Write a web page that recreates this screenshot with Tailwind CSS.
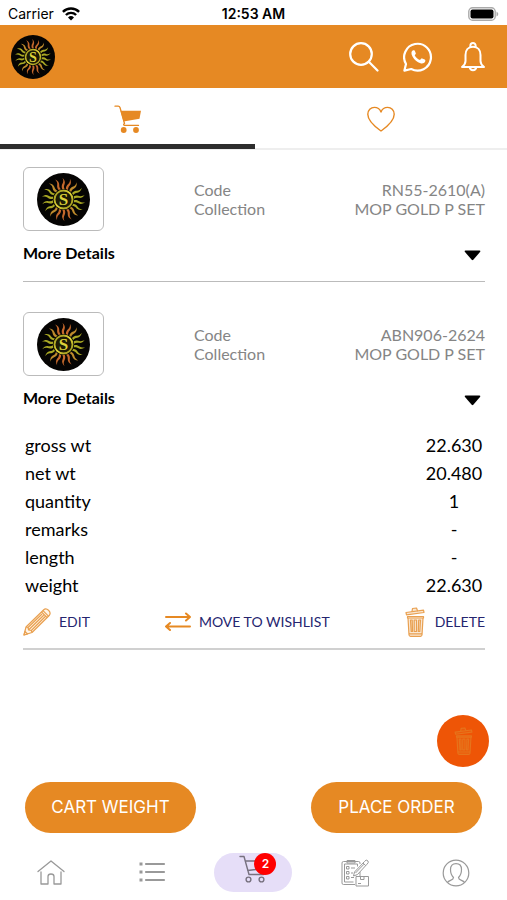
<!DOCTYPE html>
<html lang="en">
<head>
<meta charset="utf-8">
<meta name="viewport" content="width=device-width, initial-scale=1">
<title>Cart</title>
<script src="https://cdn.jsdelivr.net/npm/@tailwindcss/browser@4"></script>
</head>
<body class="flex min-h-screen flex-col bg-white font-['Lato',sans-serif] text-black">

<!-- Shared artwork -->
<svg class="absolute size-0" aria-hidden="true">
  <defs>
    <linearGradient id="gold" x1="0" y1="0" x2="1" y2="1">
      <stop offset="0" stop-color="#8f8a18"/><stop offset=".5" stop-color="#e3d83a"/><stop offset="1" stop-color="#8f8a18"/>
    </linearGradient>
    <path id="ray" d="M47.500 30 C46 26 46.500 23 48.500 19.500 C50 16.500 50 13 48 9 C52.500 13 53.500 17.500 52 21 C50.500 24.500 50.500 27 52 30 Z"/>
  </defs>
  <symbol id="sun" viewBox="0 0 100 100">
    <circle cx="50" cy="50" r="50" fill="#050403"/>
    <g fill="#c4682c">
      <use href="#ray"/><use href="#ray" transform="rotate(20 50 50)"/><use href="#ray" transform="rotate(-20 50 50)"/>
      <use href="#ray" transform="rotate(160 50 50)"/><use href="#ray" transform="rotate(180 50 50)"/><use href="#ray" transform="rotate(200 50 50)"/>
    </g>
    <g fill="#bd8a2c">
      <use href="#ray" transform="rotate(40 50 50)"/><use href="#ray" transform="rotate(-40 50 50)"/>
      <use href="#ray" transform="rotate(140 50 50)"/><use href="#ray" transform="rotate(220 50 50)"/>
    </g>
    <g fill="#a9a824">
      <use href="#ray" transform="rotate(60 50 50)"/><use href="#ray" transform="rotate(80 50 50)"/><use href="#ray" transform="rotate(100 50 50)"/><use href="#ray" transform="rotate(120 50 50)"/>
      <use href="#ray" transform="rotate(240 50 50)"/><use href="#ray" transform="rotate(260 50 50)"/><use href="#ray" transform="rotate(280 50 50)"/><use href="#ray" transform="rotate(300 50 50)"/>
    </g>
    <circle cx="50" cy="50" r="17" fill="#1c1a05" stroke="url(#gold)" stroke-width="3.500"/>
    <text x="50" y="60.500" text-anchor="middle" font-family="Liberation Serif, serif" font-weight="700" font-size="32" fill="#ddd23a">S</text>
  </symbol>
  <symbol id="bin" viewBox="0 0 20 30">
    <g fill="none" stroke="currentColor" stroke-width="1.200" stroke-linecap="round" stroke-linejoin="round">
      <path fill="currentColor" fill-opacity=".25" d="M1 5.500 18.500 3.200 19 5.500 1.500 7.800Z"/>
      <path fill="currentColor" fill-opacity=".25" d="M7 4.500 7.500 1.500 11.500 1 12.500 3.800M2.500 9.500H18.500V11H2.500ZM3 11 4 28Q4.200 29.300 5.500 29.300H15.500Q16.800 29.300 17 28L18 11M4.500 26.800H16.500"/>
      <path d="M5.500 13 6.200 24.500H7.500L7.200 13ZM9.200 13V24.500H11.500V13ZM13.700 13 13.300 24.500H14.800L15.500 13Z"/>
    </g>
  </symbol>
</svg>

<!-- Status bar -->
<div class="grid h-[25px] grid-cols-3 items-center px-2 pt-0.5 font-['Inter',sans-serif] text-sm">
  <div class="flex items-center gap-2">
    <span>Carrier</span>
    <svg class="h-[14px] w-[18px]" viewBox="0 0 18 14" fill="none" stroke="#000" stroke-width="2.400" aria-label="Wi-Fi"><path d="M.9 4.900A11.500 11.500 0 0 1 17.100 4.900M3.900 8A7.300 7.300 0 0 1 14.100 8"/><path d="M9 13.600 6 10.500A4.300 4.300 0 0 1 12 10.500Z" fill="#000" stroke="none"/></svg>
  </div>
  <time class="text-center font-semibold">12:53 AM</time>
  <svg class="h-[14px] w-[31px] justify-self-end" viewBox="0 0 31 14" aria-label="Battery full"><rect x=".8" y=".8" width="26.400" height="12.400" rx="3.800" fill="#fff" stroke="#aaa" stroke-width="1.400"/><rect x="2.500" y="2.500" width="23" height="9" rx="2" fill="#000"/><path d="M28.500 4.500Q30.300 5.500 30.300 7T28.500 9.500Z" fill="#aaa"/></svg>
</div>

<!-- App bar -->
<header class="flex h-[63px] items-center justify-between bg-[#e68923] pr-[22px] pl-[11px] text-white">
  <a href="#" aria-label="Home page"><svg class="size-[44px]"><use href="#sun"/></svg></a>
  <div class="flex items-center gap-6">
    <button type="button" aria-label="Search"><svg class="block size-[30px]" viewBox="0 0 30 30" fill="none" stroke="currentColor" stroke-width="2.200" stroke-linecap="round"><circle cx="12" cy="12" r="10.800"/><path d="M19.800 19.800 28.500 28.500"/></svg></button>
    <button type="button" aria-label="WhatsApp"><svg class="block size-[30px]" viewBox="0 0 30 30" fill="none" stroke="currentColor" stroke-width="2.200"><path d="M1.400 28.600 3 22A13.400 13.400 0 1 1 8.200 27Z" stroke-linejoin="round"/><path d="M10 8.300C8 9.300 8 12 9.500 14.500 11.500 18 14 20.300 17.500 21.300 20 22 22.300 20.500 22.400 18.700Q22.400 18 21.700 17.600L19.200 16.400Q18.600 16.200 18.100 16.800L17 18.100C14.500 17.200 12.700 15.400 11.700 13.300L12.700 12Q13 11.500 12.700 11L11.700 8.600Q11.200 7.900 10 8.300Z" fill="currentColor" stroke="none"/></svg></button>
    <button type="button" class="ml-1" aria-label="Notifications"><svg class="block h-[30px] w-[24px]" viewBox="0 0 24 30" fill="none" stroke="currentColor" stroke-width="2" stroke-linejoin="round"><path d="M9.400 5.300V3.600A2.600 2.600 0 0 1 14.600 3.600V5.300M12 4.800C7 4.800 4.500 8.500 4.500 13V19C4.500 21.500 3.200 23.300 1 25H23C20.800 23.300 19.500 21.500 19.500 19V13C19.500 8.500 17 4.800 12 4.800ZM8.600 25.300A3.500 3.800 0 0 0 15.400 25.300"/></svg></button>
  </div>
</header>

<!-- Tabs -->
<nav class="flex h-[62px] border-b-2 border-[#eee]" aria-label="Lists">
  <a href="#cart" aria-label="Cart" aria-current="page" class="-mb-px flex flex-1 items-center justify-center border-b-[5px] border-[#2d2d2d] pt-1.5 pl-0.5">
    <svg class="size-[28px]" viewBox="0 0 28 28" fill="#e68923"><path d="M1 1.200H4.200Q5.500 1.200 6 2.500L10.500 18.500Q8.800 19.800 10.300 20.400H24.500" fill="none" stroke="#e68923" stroke-width="1.300" stroke-linecap="round"/><path d="M6.500 5.700H27L25.500 13.800 9.500 16.600Z"/><circle cx="9.700" cy="25" r="2.900"/><circle cx="22" cy="25" r="2.900"/></svg>
  </a>
  <a href="#wishlist" aria-label="Wishlist" class="flex flex-1 items-center justify-center pt-0.5">
    <svg class="h-[26px] w-[28px]" viewBox="0 0 28 26" fill="none" stroke="#e68923" stroke-width="1.400" stroke-linejoin="round"><path d="M14 25C11 22.800.8 16 .8 8.300.8 4.200 3.800 1.400 7.400 1.400 10.700 1.400 13 3.500 14 6 15 3.500 17.300 1.400 20.600 1.400 24.200 1.400 27.200 4.200 27.200 8.300 27.200 16 17 22.800 14 25Z"/></svg>
  </a>
</nav>

<main class="pr-[22px] pl-[23px]">
  <article class="border-b border-[#bbb] pt-[17px] pb-[18px]">
    <div class="flex">
      <div class="flex h-16 w-[81px] items-center justify-center rounded-md border border-[#bbb]"><svg class="size-[53px]"><use href="#sun"/></svg></div>
      <dl class="ml-[90px] grid flex-1 grid-cols-[auto_1fr] content-center text-base leading-[19px] text-[#858585]">
        <dt>Code</dt><dd class="text-right">RN55-2610(A)</dd>
        <dt>Collection</dt><dd class="text-right">MOP GOLD P SET</dd>
      </dl>
    </div>
    <button type="button" class="mt-3 flex w-full items-center justify-between pr-1 text-base leading-5 font-bold" aria-expanded="false">More Details
      <svg class="mt-1 h-[11px] w-[17px]" viewBox="0 0 17 11"><path d="M1.500.5H15.500Q17 .8 16 2L9.300 9.800Q8.500 10.600 7.700 9.800L1 2Q0 .8 1.500.5Z"/></svg>
    </button>
  </article>

  <article class="border-b-2 border-[#d0d0d0] pt-[30px] pb-[11px]">
    <div class="flex">
      <div class="flex h-16 w-[81px] items-center justify-center rounded-md border border-[#bbb]"><svg class="size-[53px]"><use href="#sun"/></svg></div>
      <dl class="ml-[90px] grid flex-1 grid-cols-[auto_1fr] content-center text-base leading-[19px] text-[#858585]">
        <dt>Code</dt><dd class="text-right">ABN906-2624</dd>
        <dt>Collection</dt><dd class="text-right">MOP GOLD P SET</dd>
      </dl>
    </div>
    <button type="button" class="mt-3 flex w-full items-center justify-between pr-1 text-base leading-5 font-bold" aria-expanded="true">More Details
      <svg class="mt-1 h-[11px] w-[17px]" viewBox="0 0 17 11"><path d="M1.500.5H15.500Q17 .8 16 2L9.300 9.800Q8.500 10.600 7.700 9.800L1 2Q0 .8 1.500.5Z"/></svg>
    </button>
    <table class="mt-[23px] w-full text-lg leading-7">
      <tbody>
        <tr><th scope="row" class="pl-0.5 text-left font-normal">gross wt</th><td class="w-[62px] text-center">22.630</td></tr>
        <tr><th scope="row" class="pl-0.5 text-left font-normal">net wt</th><td class="text-center">20.480</td></tr>
        <tr><th scope="row" class="pl-0.5 text-left font-normal">quantity</th><td class="text-center">1</td></tr>
        <tr><th scope="row" class="pl-0.5 text-left font-normal">remarks</th><td class="text-center">-</td></tr>
        <tr><th scope="row" class="pl-0.5 text-left font-normal">length</th><td class="text-center">-</td></tr>
        <tr><th scope="row" class="pl-0.5 text-left font-normal">weight</th><td class="text-center">22.630</td></tr>
      </tbody>
    </table>
    <div class="mt-2 flex items-center justify-between text-sm text-[#25256f]">
      <button type="button" class="flex items-center gap-2">
        <svg class="size-[28px]" viewBox="0 0 28 28" fill="#fff5e8" stroke="#e9a050" stroke-width="1.200" stroke-linejoin="round"><path d="M1 27 3 19 20.500 2Q22.800-.2 25.500 2.300 28.300 5 26.200 7.500L9 24.500Z"/><path d="M18.500 4 24.200 9.700M20 2.600 25.700 8.300M3 19 5 19.500 5.600 22 8.300 22.500 9 24.500M5 19.500 19 6M8.300 22.500 22.300 8.500M6 21.500 20.700 7.200M1 27 4.500 26 2 23.500Z" fill="none"/></svg>
        EDIT</button>
      <button type="button" class="flex items-center gap-2">
        <svg class="h-[20px] w-[26px]" viewBox="0 0 26 20" fill="none" stroke="#e68923" stroke-width="2" stroke-linecap="round" stroke-linejoin="round"><path d="M1 5H25M21 1.500 25 5 21 8.500M25 14.500H1M5 11 1 14.500 5 18"/></svg>
        MOVE TO WISHLIST</button>
      <button type="button" class="flex items-center gap-2.5">
        <svg class="h-[30px] w-[20px] text-[#e9a050]"><use href="#bin"/></svg>
        DELETE</button>
    </div>
  </article>
</main>

<footer class="mt-auto">
  <div class="flex justify-end pr-[18px]">
    <button type="button" aria-label="Empty cart" class="flex size-[52px] items-center justify-center rounded-full bg-[#ee5506]"><svg class="h-[28px] w-[19px] text-[#e6741c]"><use href="#bin"/></svg></button>
  </div>
  <div class="mt-[15px] flex justify-between px-[25px] font-['Inter',sans-serif] text-[17px] text-white">
    <button type="button" class="h-[51px] w-[171px] rounded-full bg-[#e68923]">CART WEIGHT</button>
    <button type="button" class="h-[51px] w-[171px] rounded-full bg-[#e68923]">PLACE ORDER</button>
  </div>
  <nav class="mt-5 mb-2 grid h-[39px] grid-cols-5 items-center justify-items-center text-[#999]" aria-label="Main">
    <a href="#home" aria-label="Home"><svg class="size-[28px]" viewBox="0 0 28 28" fill="none" stroke="currentColor" stroke-width="1.300" stroke-linecap="round" stroke-linejoin="round"><path d="M1 12.500 14 2 27 12.500M4 13V25H11V17.500Q11 15 14 15T17 17.500V25H24V13"/></svg></a>
    <a href="#menu" aria-label="List"><svg class="size-[28px]" viewBox="0 0 28 28" stroke="currentColor" stroke-width="2.200"><path d="M1.500 5H4.500M1.500 13H4.500M1.500 21H4.500" stroke-width="3"/><path d="M8 5H26M8 13H26M8 21H26" stroke-linecap="round"/></svg></a>
    <a href="#cart" aria-label="Cart, 2 items" aria-current="page" class="relative flex h-[39px] w-[78px] items-start justify-center rounded-full bg-[#e6def8] pt-0.5 text-[#77717f]">
      <svg class="size-[28px]" viewBox="0 0 28 28" fill="none" stroke="currentColor" stroke-width="1.400" stroke-linecap="round" stroke-linejoin="round"><path d="M1 1.500H5L10 19.500H24.500M6.500 6H26L24.500 13.500 8.700 15.500"/><circle cx="9.500" cy="24.500" r="2.400"/><circle cx="22.500" cy="24.500" r="2.400"/></svg>
      <span class="absolute top-0 right-4 flex size-[22px] items-center justify-center rounded-full bg-[#f00] font-['Inter',sans-serif] text-xs font-semibold text-white">2</span>
    </a>
    <a href="#orders" aria-label="Orders"><svg class="size-[28px]" viewBox="0 0 28 28" fill="none" stroke="currentColor" stroke-linejoin="round"><path d="M14 25.500H2.500Q1 25.500 1 24V4Q1 2.500 2.500 2.500H17.500Q19 2.500 19 4V5M19 13V17M12.500 23H3.500V5H16.500V7.500M6 1.500H14V4H6Z"/><path d="M5.500 7.500H8V10H5.500ZM5.500 12.500H8V15H5.500ZM5.500 17.500H8V20H5.500ZM10 9H14M10 14H12M10 18.500H13"/><path d="M12.500 17 13.500 13 23.500 2.500Q25-.2 27 2 28 3.700 26 5.200L16.500 15.500ZM22 4 24.800 6.700M14.500 14 23 5.200"/><path d="M15 17.500H27.500V27H15ZM19.500 17.500V20.500H23V17.500M17 24.500H20"/></svg></a>
    <a href="#profile" aria-label="Profile"><svg class="size-[28px]" viewBox="0 0 28 28" fill="none" stroke="currentColor" stroke-width="1.200"><circle cx="14" cy="14" r="12.800"/><path d="M5.500 23.400C7 21 11.500 21.500 11.500 18.500 9.500 16.500 8.500 14 8.500 10.500 8.500 6.700 10.500 4.700 14 4.700S19.500 6.700 19.500 10.500C19.500 14 18.500 16.500 16.500 18.500 16.500 21.500 21 21 22.500 23.400"/></svg></a>
  </nav>
</footer>
</body>
</html>
